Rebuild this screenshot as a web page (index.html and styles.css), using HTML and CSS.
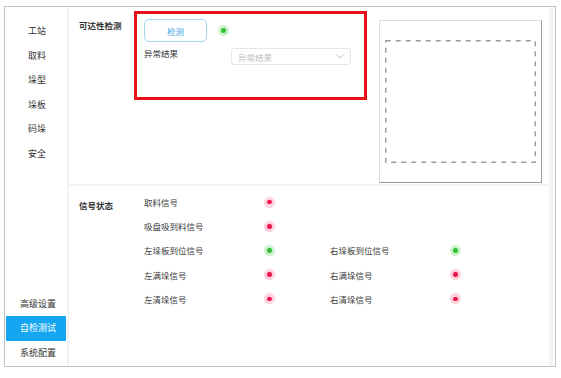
FILE: index.html
```html
<!DOCTYPE html>
<html lang="zh">
<head>
<meta charset="utf-8">
<link rel="stylesheet" href="styles.css">
</head>
<body>
<div class="frame">
  <nav class="sidebar">
    <div class="nav-item">工站</div>
    <div class="nav-item">取料</div>
    <div class="nav-item">垛型</div>
    <div class="nav-item">垛板</div>
    <div class="nav-item">码垛</div>
    <div class="nav-item">安全</div>
    <div class="nav-spacer"></div>
    <div class="nav-item">高级设置</div>
    <div class="nav-item active">自检测试</div>
    <div class="nav-item">系统配置</div>
  </nav>
  <main class="main">
    <section class="top">
      <div class="sec-label">可达性检测</div>
      <div class="check-box">
        <div class="check-row">
          <button class="btn">检测</button>
          <span class="dot green"></span>
        </div>
        <div class="result-row">
          <span class="result-label">异常结果</span>
          <div class="select">
            <span class="placeholder">异常结果</span>
            <svg class="chevron" width="8" height="5" viewBox="0 0 8 5"><path d="M0.5 0.5 L4 4 L7.5 0.5" fill="none" stroke="#bdbdbd" stroke-width="1"/></svg>
          </div>
        </div>
      </div>
      <div class="preview">
        <svg class="dash" width="151" height="123" viewBox="0 0 151 123"><rect x="0.75" y="0.75" width="149.5" height="121.5" fill="none" stroke="#9a9aa0" stroke-width="1.4" stroke-dasharray="5 5"/></svg>
      </div>
    </section>
    <section class="bottom">
      <div class="sec-label">信号状态</div>
      <div class="signals">
        <div class="sig-row">
          <span class="sig-name">取料信号</span><span class="dot red"></span>
        </div>
        <div class="sig-row">
          <span class="sig-name">吸盘吸到料信号</span><span class="dot red"></span>
        </div>
        <div class="sig-row">
          <span class="sig-name">左垛板到位信号</span><span class="dot green"></span>
          <span class="sig-name second">右垛板到位信号</span><span class="dot green"></span>
        </div>
        <div class="sig-row">
          <span class="sig-name">左满垛信号</span><span class="dot red"></span>
          <span class="sig-name second">右满垛信号</span><span class="dot red"></span>
        </div>
        <div class="sig-row">
          <span class="sig-name">左清垛信号</span><span class="dot red"></span>
          <span class="sig-name second">右清垛信号</span><span class="dot red"></span>
        </div>
      </div>
    </section>
  </main>
  <div class="edge"></div>
</div>
</body>
</html>
```
FILE: styles.css
```css
* { box-sizing: border-box; }
html, body { margin: 0; padding: 0; background: #fff; }
body {
  font-family: "Noto Sans CJK SC", "Noto Sans", sans-serif;
  color: #3a3a3a;
}
.frame {
  margin: 6px 0 0 4px;
  width: 552px;
  height: 361px;
  border: 1px solid #c2c2c2;
  display: flex;
}
.sidebar {
  width: 64px;
  padding: 12px 1px 0 1px;
  display: flex;
  flex-direction: column;
  border-right: 2px solid #f3f3f3;
}
.nav-item {
  height: 24.6px;
  line-height: 24.6px;
  font-size: 9px;
  color: #333;
  padding-left: 22px;
}
.nav-item:nth-child(n+8) { padding-left: 14px; }
.nav-spacer { flex: 1; }
.nav-item.active {
  background: #16a6f1;
  color: #fff;
  height: 25px;
}
.main {
  width: 480px;
  display: flex;
  flex-direction: column;
}
.edge {
  width: 4px;
  background: #f3f3f3;
}
.sec-label {
  padding-left: 10px;
  font-size: 8.5px;
  font-weight: bold;
  color: #333;
  line-height: 12px;
  flex-shrink: 0;
}
.top {
  height: 179px;
  border-bottom: 2px solid #f3f3f3;
  display: flex;
}
.top .sec-label { width: 65px; padding-top: 12px; }
.check-box {
  margin-top: 4px;
  width: 233px;
  height: 89px;
  border: 3px solid #e8121a;
  padding: 5px 0 0 7px;
}
.check-row {
  display: flex;
  align-items: center;
}
.btn {
  width: 63px;
  height: 23px;
  border: 1px solid #9fd6f2;
  border-radius: 5px;
  background: #fff;
  color: #3aa2e6;
  font-family: inherit;
  font-size: 8.5px;
  padding: 0;
}
.check-row .dot { margin-left: 11px; }
.result-row {
  margin-top: 6px;
  display: flex;
  align-items: center;
}
.result-label {
  width: 87px;
  font-size: 8.5px;
  color: #333;
  margin-top: -8px;
}
.select {
  width: 120px;
  height: 17px;
  border: 1px solid #e6e6e6;
  border-radius: 3px;
  display: flex;
  align-items: center;
  justify-content: space-between;
  padding: 0 6px 0 6px;
}
.placeholder { font-size: 8.5px; color: #c2c2c2; }
.chevron { display: block; }
.preview {
  margin: 13px 0 0 12px;
  width: 163px;
  height: 163px;
  border: 1px solid;
  border-color: #dcdcdc #9c9c9c #9c9c9c #dcdcdc;
  padding: 19px 0 0 5px;
}
.dash { display: block; }
.bottom {
  display: flex;
  padding-top: 4px;
}
.bottom .sec-label { width: 75px; padding-top: 9px; }
.signals {
  display: flex;
  flex-direction: column;
}
.sig-row {
  height: 24.2px;
  display: flex;
  align-items: center;
}
.sig-name {
  width: 120px;
  font-size: 8.5px;
  color: #3a3a3a;
}
.sig-name.second {
  margin-left: 55px;
}
.dot {
  width: 11px;
  height: 11px;
  border-radius: 50%;
  display: inline-flex;
  align-items: center;
  justify-content: center;
  flex-shrink: 0;
}
.dot::after {
  content: "";
  width: 4.5px;
  height: 4.5px;
  border-radius: 50%;
}
.dot.red { background: #fcd3dd; }
.dot.red::after { background: #e8164c; }
.dot.green { background: #cdf2cd; }
.dot.green::after { background: #35bf35; }
```
